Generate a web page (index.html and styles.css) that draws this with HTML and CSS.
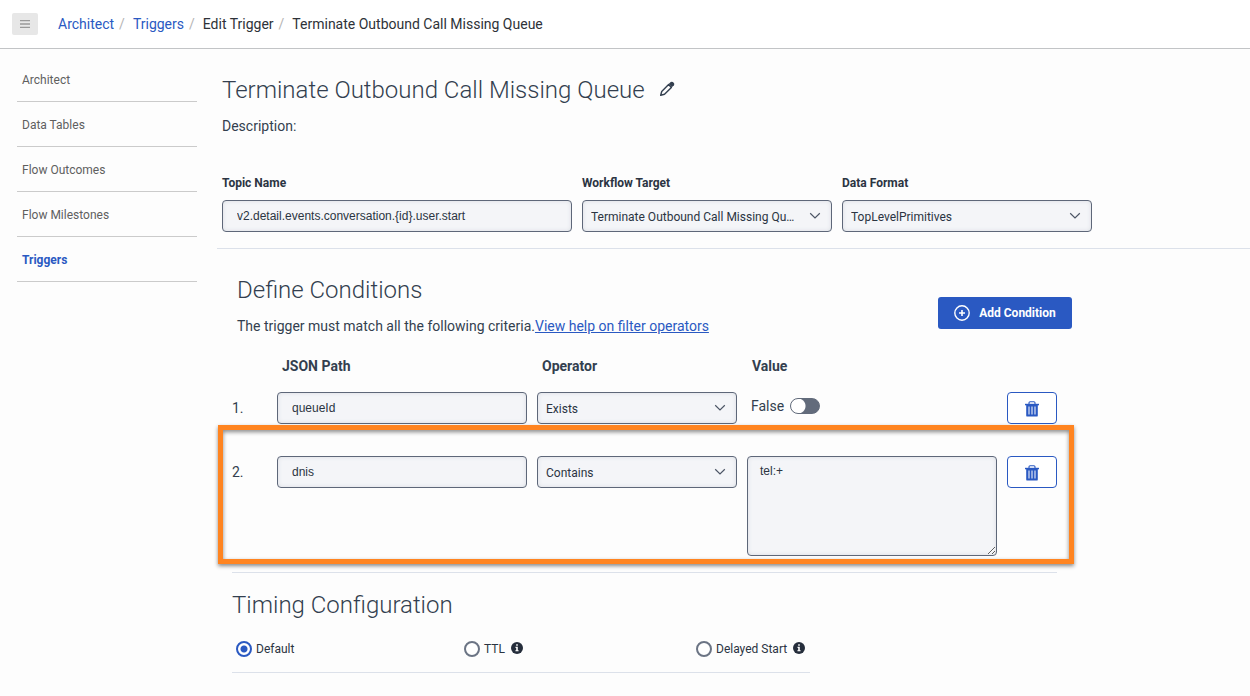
FILE: index.html
```html
<!DOCTYPE html>
<html lang="en">
<head>
<meta charset="utf-8">
<meta name="viewport" content="width=device-width, initial-scale=1">
<title>Edit Trigger</title>
<link rel="stylesheet" href="styles.css">
</head>
<body>
<svg class="sprite" aria-hidden="true">
  <symbol id="chevron" viewBox="0 0 12 8"><path d="M1.200 1.300 6 6l4.800-4.700" fill="none" stroke="currentColor" stroke-width="1.200"/></symbol>
  <symbol id="trash" viewBox="0 0 14 16">
    <path d="M4 3V1.800Q4 .7 5.100 .7h3.800Q10 .7 10 1.800V3" fill="none" stroke="currentColor" stroke-width="1.100"/>
    <path d="M0 2.800h14v1.500H0z" fill="currentColor"/>
    <path fill-rule="evenodd" d="M1.200 4h11.600v10.400q0 1.200-1.200 1.200H2.400q-1.200 0-1.200-1.200zM3.500 5.500v8h1v-8zM6.500 5.500v8h1v-8zM9.500 5.500v8h1v-8z" fill="currentColor"/>
  </symbol>
  <symbol id="info" viewBox="0 0 12 12">
    <circle cx="6" cy="6" r="6" fill="currentColor"/>
    <path d="M5.200 2.200h1.600v1.500H5.200zM4.500 4.800h2.300v3.400h.8v1.100H4.400V8.200h.8V5.900h-.7z" fill="#fff"/>
  </symbol>
</svg>

<header class="topbar">
  <button class="menu-button" type="button" aria-label="Menu">
    <svg width="10" height="8" viewBox="0 0 10 8" aria-hidden="true"><path d="M0 .7h10M0 4h10M0 7.300h10" stroke="currentColor" stroke-width="1.300"/></svg>
  </button>
  <nav aria-label="Breadcrumb">
    <ol class="breadcrumb">
      <li><a href="#architect">Architect</a></li>
      <li><a href="#triggers">Triggers</a></li>
      <li>Edit Trigger</li>
      <li>Terminate Outbound Call Missing Queue</li>
    </ol>
  </nav>
</header>

<div class="layout">
  <nav class="sidebar" aria-label="Sections">
    <a href="#architect">Architect</a>
    <a href="#tables">Data Tables</a>
    <a href="#outcomes">Flow Outcomes</a>
    <a href="#milestones">Flow Milestones</a>
    <a class="active" href="#triggers" aria-current="page">Triggers</a>
  </nav>

  <main class="content">
    <section class="summary">
      <div class="title-row">
        <h1>Terminate Outbound Call Missing Queue</h1>
        <button class="edit-button" type="button" aria-label="Edit name">
          <svg width="16" height="16" viewBox="0 0 16 16" aria-hidden="true">
            <path d="M1.700 14.300 2.700 10.500 9.600 3.600 12.400 6.400 5.500 13.300z" fill="none" stroke="currentColor" stroke-width="1.400" stroke-linejoin="round"/>
            <path d="M9.700 3.100 11.700 1.100q1.100-.9 2.200 0l1 1q.9 1.100 0 2.200l-2 2z" fill="currentColor"/>
          </svg>
        </button>
      </div>
      <p class="description">Description:</p>
      <div class="trigger-fields">
        <div class="field">
          <label for="topic">Topic Name</label>
          <input class="control" id="topic" type="text" value="v2.detail.events.conversation.{id}.user.start">
        </div>
        <div class="field">
          <label for="target">Workflow Target</label>
          <div class="select">
            <select class="control" id="target"><option>Terminate Outbound Call Missing Queue</option></select>
            <svg class="chevron" aria-hidden="true"><use href="#chevron"/></svg>
          </div>
        </div>
        <div class="field">
          <label for="format">Data Format</label>
          <div class="select">
            <select class="control" id="format"><option>TopLevelPrimitives</option></select>
            <svg class="chevron" aria-hidden="true"><use href="#chevron"/></svg>
          </div>
        </div>
      </div>
    </section>

    <section class="conditions">
      <div class="conditions-head">
        <div>
          <h2>Define Conditions</h2>
          <p>The trigger must match all the following criteria.<a href="#help">View help on filter operators</a></p>
        </div>
        <button class="add-button" type="button">
          <svg width="16" height="16" viewBox="0 0 16 16" aria-hidden="true"><circle cx="8" cy="8" r="7.200" fill="none" stroke="currentColor" stroke-width="1.400"/><path d="M8 5v6M5 8h6" stroke="currentColor" stroke-width="1.600"/></svg>
          Add Condition
        </button>
      </div>

      <div class="condition-list">
        <div class="condition column-names">
          <span></span>
          <span id="col-path">JSON Path</span>
          <span id="col-operator">Operator</span>
          <span id="col-value">Value</span>
        </div>
        <div class="condition">
          <span class="number">1.</span>
          <input class="control" type="text" value="queueId" aria-labelledby="col-path">
          <div class="select">
            <select class="control" aria-labelledby="col-operator"><option>Exists</option></select>
            <svg class="chevron" aria-hidden="true"><use href="#chevron"/></svg>
          </div>
          <label class="toggle">False <input type="checkbox" role="switch"></label>
          <button class="delete-button" type="button" aria-label="Delete condition 1"><svg aria-hidden="true"><use href="#trash"/></svg></button>
        </div>
        <div class="condition highlighted">
          <span class="number">2.</span>
          <input class="control" type="text" value="dnis" aria-labelledby="col-path">
          <div class="select">
            <select class="control" aria-labelledby="col-operator"><option>Contains</option></select>
            <svg class="chevron" aria-hidden="true"><use href="#chevron"/></svg>
          </div>
          <textarea class="control" aria-labelledby="col-value">tel:+</textarea>
          <button class="delete-button" type="button" aria-label="Delete condition 2"><svg aria-hidden="true"><use href="#trash"/></svg></button>
        </div>
      </div>
    </section>

    <section class="timing">
      <h2>Timing Configuration</h2>
      <div class="timing-options">
        <label><input type="radio" name="timing" checked>Default</label>
        <label><input type="radio" name="timing">TTL<svg class="info" aria-hidden="true"><use href="#info"/></svg></label>
        <label><input type="radio" name="timing">Delayed Start<svg class="info" aria-hidden="true"><use href="#info"/></svg></label>
      </div>
    </section>
  </main>
</div>
</body>
</html>
```

FILE: styles.css
```css
:root {
  --blue: #2a59c2;
  --ink: #333f4f;
  --outline: #5e6779;
  --field: #f4f5f8;
  --rule: #dce1ea;
}

* { box-sizing: border-box; }

body {
  margin: 0;
  background: #fdfdfd;
  color: var(--ink);
  font-family: Roboto, "Liberation Sans", sans-serif;
  font-size: 14px;
  line-height: 20px;
}

h1, h2, p, ol { margin: 0; padding: 0; }
h1, h2 { font-size: 24px; font-weight: 300; line-height: 32px; }
a { color: var(--blue); }
button { padding: 0; font: inherit; cursor: pointer; }
.sprite { display: none; }

/* Top bar */
.topbar {
  display: flex;
  align-items: center;
  gap: 20px;
  min-height: 49px;
  padding: 0 12px;
  background: #fff;
  border-bottom: 1px solid #c2c4c6;
}
.menu-button {
  display: grid;
  place-items: center;
  width: 26px;
  height: 22px;
  border: 0;
  border-radius: 2px;
  background: #e7e7e7;
  color: #999;
}
.breadcrumb { display: flex; flex-wrap: wrap; list-style: none; color: #2e3238; }
.breadcrumb a { text-decoration: none; }
.breadcrumb li + li::before { content: "/"; margin: 0 8px 0 5px; color: #b5b5b5; }

/* Page columns */
.layout { display: flex; gap: 20px; padding-left: 17px; }
.sidebar { flex: 0 0 180px; padding-top: 8px; }
.sidebar a {
  display: block;
  padding: 13px 5px 11px;
  border-bottom: 1px solid #cbcbcb;
  color: #5f5f5f;
  font-size: 12px;
  text-decoration: none;
}
.sidebar .active { color: var(--blue); font-weight: 700; }
.content { flex: 1; min-width: 0; }

/* Shared controls */
.control {
  display: block;
  width: 100%;
  height: 32px;
  margin: 0;
  border: 1px solid var(--outline);
  border-radius: 4px;
  background: var(--field);
  box-shadow: inset 0 0 4px #d9dce2;
  color: #2b3442;
  font-size: 12px;
}
input.control { padding: 0 14px; font-family: "Liberation Sans", sans-serif; }
textarea.control {
  height: 100px;
  padding: 6px 12px;
  font-family: "Liberation Sans", sans-serif;
  line-height: 16px;
  resize: both;
}
.select { position: relative; }
select.control {
  appearance: none;
  padding: 1px 35px 0 8px;
  font-family: inherit;
  overflow: hidden;
  text-overflow: ellipsis;
  white-space: nowrap;
}
.chevron {
  position: absolute;
  top: 12px;
  right: 11px;
  width: 12px;
  height: 8px;
  color: #4c5565;
  pointer-events: none;
}

/* Trigger summary */
.summary { padding: 25px 5px 16px; border-bottom: 1px solid var(--rule); }
.title-row { display: flex; align-items: center; gap: 14px; }
.edit-button { height: 24px; border: 0; background: none; color: var(--ink); line-height: 16px; }
.edit-button svg { display: block; margin-bottom: 2px; }
.description { margin-top: 10px; }
.trigger-fields {
  display: grid;
  grid-template-columns: 7fr 5fr 5fr;
  gap: 10px;
  max-width: 870px;
  margin-top: 37px;
}
.field { min-width: 0; }
.field label {
  display: block;
  margin-bottom: 7px;
  color: #2b3442;
  font-size: 12px;
  font-weight: 700;
}

/* Conditions */
.conditions { max-width: 855px; padding: 25px 0 0 15px; }
.conditions-head { display: flex; justify-content: space-between; align-items: flex-end; padding-left: 5px; }
.conditions-head p { margin-top: 10px; }
.add-button {
  display: flex;
  align-items: center;
  justify-content: center;
  gap: 9px;
  width: 134px;
  height: 32px;
  margin-bottom: 7px;
  border: 0;
  border-radius: 3px;
  background: var(--blue);
  color: #fff;
  font-size: 12px;
  font-weight: 700;
}
.condition-list {
  display: grid;
  gap: 32px;
  margin: 20px 15px 0 0;
  padding-bottom: 16px;
  border-bottom: 1px solid var(--rule);
}
.condition {
  display: grid;
  grid-template-columns: 35px minmax(0, 5fr) minmax(0, 4fr) minmax(0, 5fr) 50px;
  column-gap: 10px;
  align-items: start;
}
.column-names { margin-bottom: -16px; font-weight: 700; }
.column-names span { padding-left: 5px; }
.number { line-height: 32px; }
.toggle { display: flex; align-items: center; gap: 6px; padding-left: 4px; line-height: 28px; }
.toggle input {
  appearance: none;
  width: 30px;
  height: 16px;
  margin: 0;
  border: 1px solid #626b7b;
  border-radius: 8px;
  background: radial-gradient(circle at 7px 7px, #fff 7px, #626b7b 8px);
}
.delete-button {
  display: grid;
  place-items: center;
  height: 32px;
  padding-top: 2px;
  border: 1px solid var(--blue);
  border-radius: 4px;
  background: #fff;
  color: var(--blue);
}
.delete-button svg { width: 14px; height: 16px; }
.highlighted { position: relative; }
.highlighted::after {
  content: "";
  position: absolute;
  inset: -31px -17px -8px -14px;
  border: 5px solid #ff8420;
  box-shadow: 0 2px 4px #0007, inset 0 2px 4px #0007;
  pointer-events: none;
}

/* Timing */
.timing { max-width: 593px; padding: 16px 0 0 15px; }
.timing-options {
  display: grid;
  grid-template-columns: 228px 232px 1fr;
  margin-top: 18px;
  padding: 0 0 13px 4px;
  border-bottom: 1px solid var(--rule);
  font-size: 12px;
}
.timing-options label { display: flex; align-items: center; gap: 4px; color: #2b3442; white-space: nowrap; }
.timing-options input {
  appearance: none;
  flex: none;
  width: 16px;
  height: 16px;
  margin: 0;
  border: 2px solid #6b7484;
  border-radius: 50%;
  background: #fff;
}
.timing-options input:checked {
  border-color: var(--blue);
  background: radial-gradient(circle, var(--blue) 3px, #fff 4px);
}
.info { width: 12px; height: 12px; margin: 0 0 2px 2px; color: #252d3b; }
```
